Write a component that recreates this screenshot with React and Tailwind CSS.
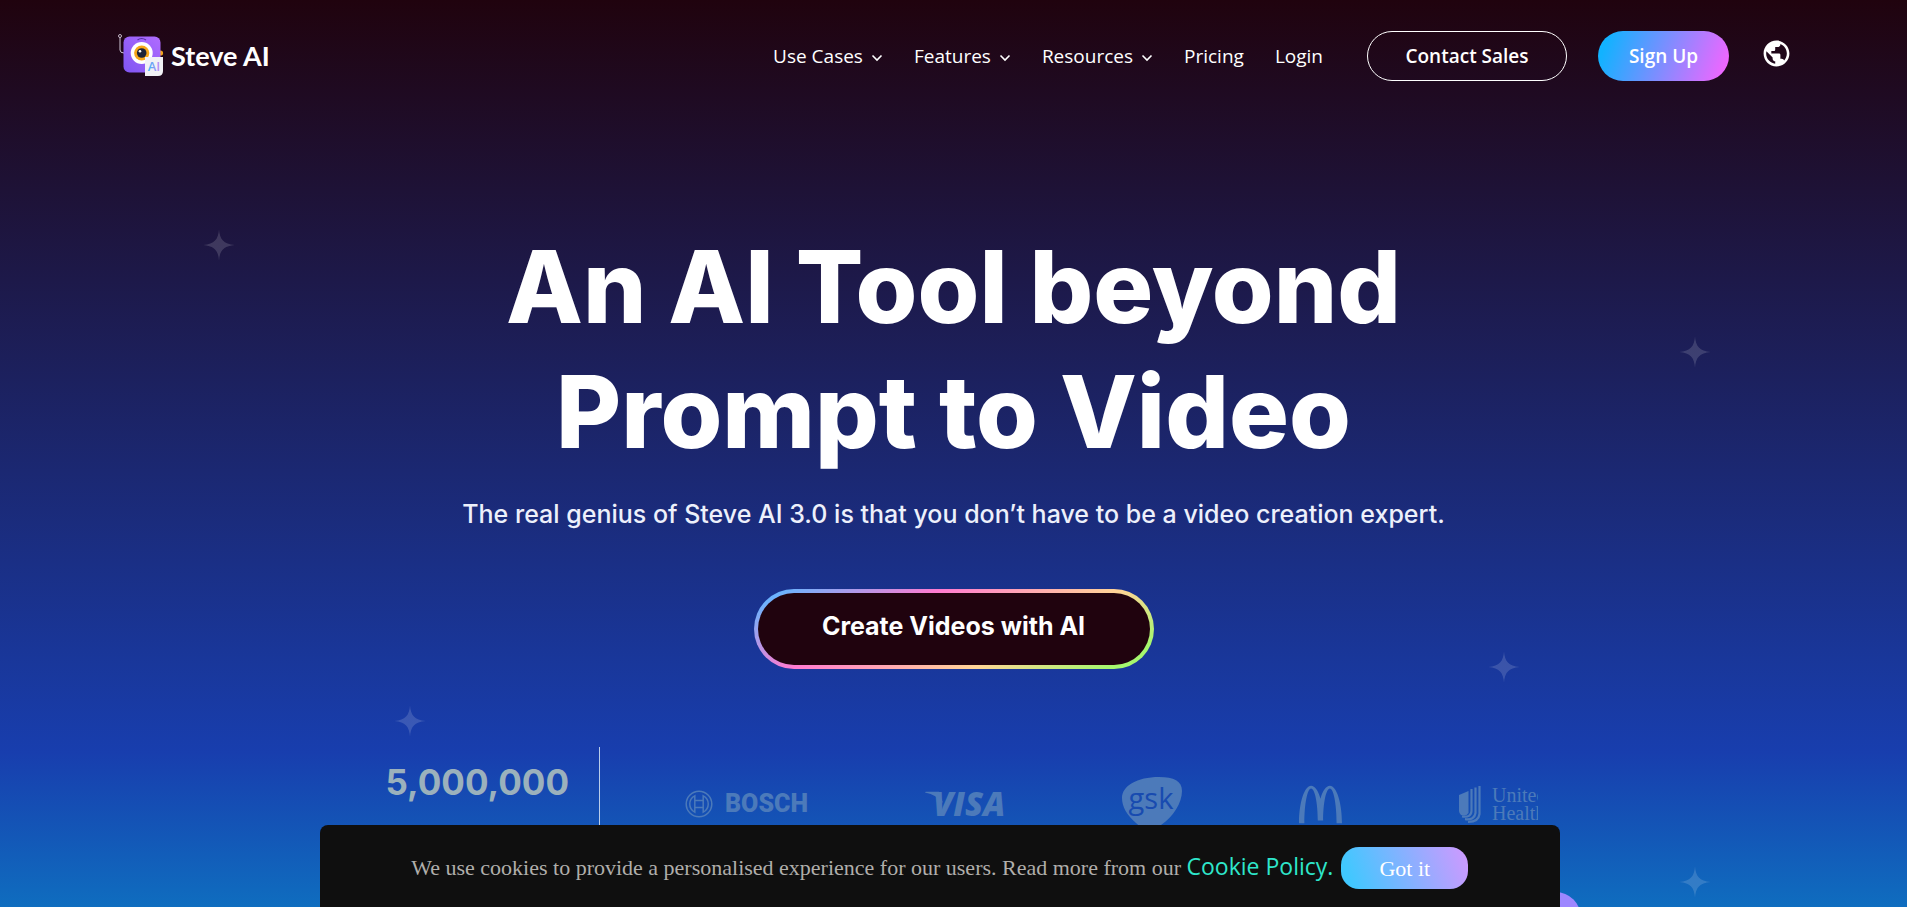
import React from "react";
import { MdPublic } from "react-icons/md";
import { SiMcdonalds } from "react-icons/si";

function Chevron() {
  return (
    <svg viewBox="0 0 12 8" className="mt-1 h-2 w-3" fill="none" stroke="currentColor" strokeWidth="1.6" aria-hidden="true">
      <path d="M1.5 1.5 6 6l4.5-4.5" />
    </svg>
  );
}

function Sparkle({ className }) {
  return (
    <svg viewBox="0 0 32 32" className={`absolute h-9 w-9 text-white/15 ${className}`} fill="currentColor" aria-hidden="true">
      <path d="M16 2C16.6 11 20 15 30 16C20 17 16.6 21 16 30C15.400 21 12 17 2 16C12 15 15.400 11 16 2Z" />
    </svg>
  );
}

function LogoMark() {
  return (
    <svg viewBox="0 0 46 44" className="h-11 w-[46px]" aria-hidden="true">
      <defs>
        <linearGradient id="body" x1="0" y1="1" x2="1" y2="0">
          <stop offset="0" stopColor="#7f55f2" />
          <stop offset="1" stopColor="#b06cff" />
        </linearGradient>
        <linearGradient id="tag" x1="0" y1="0" x2="1" y2="0">
          <stop offset="0" stopColor="#35b5f5" />
          <stop offset="1" stopColor="#c987f5" />
        </linearGradient>
      </defs>
      <path d="M2 3V16Q2 19 6 19" fill="none" stroke="#cfc6d6" strokeWidth="1" />
      <circle cx="2" cy="2" r="1.500" fill="none" stroke="#cfc6d6" strokeWidth="0.900" />
      <circle cx="42.500" cy="19" r="2.600" fill="#f5a51c" />
      <rect x="5.500" y="2.500" width="37" height="36" rx="6" fill="url(#body)" />
      <path d="M19.500 6Q23.500 3 28 6" fill="none" stroke="#54329f" strokeWidth="1.200" />
      <circle cx="23.700" cy="19" r="11" fill="#fff" />
      <circle cx="23.700" cy="19" r="7.600" fill="#f6a619" />
      <circle cx="23.700" cy="19" r="4.800" fill="#1c2438" />
      <circle cx="22" cy="17.200" r="1.300" fill="#fff" />
      <path d="M27 23H45V37Q45 42 40 42H27Z" fill="#f1f1f5" />
      <text x="36" y="37" textAnchor="middle" fontFamily="Open Sans" fontSize="13" fontWeight="600" fill="url(#tag)">AI</text>
    </svg>
  );
}

function BoschLogo() {
  return (
    <div className="flex items-center gap-3">
      <svg viewBox="0 0 28 28" className="h-7 w-7" fill="none" stroke="currentColor" strokeWidth="1.500" aria-hidden="true">
        <circle cx="14" cy="14" r="12.800" />
        <path d="M9.800 5.800A9.200 9.200 0 0 0 9.800 22.200ZM18.200 5.800A9.200 9.200 0 0 1 18.200 22.200Z" />
        <path d="M9.800 10.500H18.200M9.800 17.500H18.200" />
      </svg>
      <span className="font-[Roboto,sans-serif] text-[25px] leading-7 font-black">BOSCH</span>
    </div>
  );
}

function VisaLogo() {
  return (
    <svg viewBox="0 0 80 26" className="h-[26px] w-20 overflow-visible" fill="currentColor" role="img" aria-label="Visa">
      <path d="M0 1.500Q0 0.800 1 0.800H14L18 12Q12 4 0 1.500Z" />
      <text x="8" y="25" fontFamily="Open Sans" fontSize="33" fontStyle="italic" fontWeight="800">VISA</text>
    </svg>
  );
}

function GskLogo() {
  return (
    <svg viewBox="0 0 60 54" className="h-[54px] w-[60px]" role="img" aria-label="gsk">
      <path d="M0 21C0 9 15 0 37 0C52 0 60 4 60 14C60 26 51 40 39 48C30 56 22 54 14 46C5 38 0 30 0 21Z" fill="currentColor" />
      <text x="29" y="32" textAnchor="middle" fontFamily="Open Sans" fontSize="29" fill="#184bb0">gsk</text>
    </svg>
  );
}

function UnitedLogo() {
  return (
    <div className="flex shrink-0 items-center gap-[11px]">
      <svg viewBox="0 0 22 38" className="h-[38px] w-[22px]" fill="none" stroke="currentColor" strokeWidth="2.200" aria-hidden="true">
        <path d="M0 10L9.500 6V28Q7 32 2 30Q0 28 0 26Z" fill="currentColor" stroke="none" />
        <path d="M12.500 4V26Q12 33 3 31.500" />
        <path d="M16.500 2.500V28Q15.500 35.500 6 34.200" />
        <path d="M20.500 1V29Q19.500 37 9 36.800" />
      </svg>
      <span className="font-['Liberation_Serif',serif] text-[20px] leading-[18px]">
        United<br />Healthcare
      </span>
    </div>
  );
}

const menus = ["Use Cases", "Features", "Resources"];

export default function App() {
  return (
    <div className="relative min-h-screen overflow-hidden bg-[linear-gradient(180deg,#20030e_0%,#183eae_83%,#0f6dbf_100%)] font-['Open_Sans',sans-serif] text-white">
      <Sparkle className="top-[227px] left-[201px]" />
      <Sparkle className="top-[334px] right-[194px]" />
      <Sparkle className="top-[649px] right-[385px]" />
      <Sparkle className="top-[703px] left-[392px]" />
      <Sparkle className="top-[864px] right-[194px]" />

      <header className="flex items-center justify-between px-[118px] pt-[31px]">
        <a href="#" className="flex items-center gap-[7px]">
          <LogoMark />
          <span className="font-[Lato,sans-serif] text-[27px] leading-8 font-bold">Steve AI</span>
        </a>
        <div className="flex items-center">
          <nav className="flex items-center gap-[31px] text-[19px] leading-6 font-medium">
            {menus.map((name) => (
              <button key={name} type="button" className="flex items-center gap-2">
                {name}
                <Chevron />
              </button>
            ))}
            <a href="#">Pricing</a>
            <a href="#">Login</a>
          </nav>
          <a href="#" className="ml-11 flex h-[50px] w-[200px] items-center justify-center rounded-[25px] border border-white text-[19px] font-semibold">
            Contact Sales
          </a>
          <a href="#" className="ml-[31px] flex h-[50px] w-[131px] items-center justify-center rounded-[25px] bg-[linear-gradient(110deg,#12b2ff_8%,#f066ff_95%)] text-[19px] font-semibold">
            Sign Up
          </a>
          <button type="button" aria-label="Language" className="-mr-[3px] mb-[6px] ml-8">
            <MdPublic size={31} />
          </button>
        </div>
      </header>

      <main className="mx-auto flex max-w-[1168px] flex-col items-center pt-[143px] font-[Inter,sans-serif]">
        <h1 className="text-center text-[100px] leading-[125px] font-extrabold">
          An AI Tool beyond
          <br />
          Prompt to Video
        </h1>
        <p className="mt-6 text-center text-[25px] leading-[32px] font-medium text-[#edf0fb]">
          The real genius of Steve AI 3.0 is that you don’t have to be a video creation expert.
        </p>
        <a
          href="#"
          className="mt-[59px] flex h-20 w-[400px] items-center justify-center rounded-full border-4 border-transparent pb-1 text-[25px] font-bold [background:linear-gradient(#20030e,#20030e)_padding-box,linear-gradient(152deg,#66b5ff_5%,#ff7bd0_34%,#ffd596_67%,#a6f76e_91%)_border-box]"
        >
          Create Videos with AI
        </a>
        <section className="mt-[78px] flex h-[114px] w-full">
          <div className="border-r border-[#b9cdea] pt-[13px] pr-[30px] pl-4 text-[35px] leading-[44px] font-bold text-[#9bb1bc]">
            5,000,000
          </div>
          <div className="flex min-w-0 flex-1 items-center gap-[117px] overflow-hidden pl-[85px] text-[#4c7aba]">
            <BoschLogo />
            <div className="shrink-0"><VisaLogo /></div>
            <div className="shrink-0"><GskLogo /></div>
            <SiMcdonalds size={43} className="shrink-0" stroke="currentColor" />
            <UnitedLogo />
          </div>
        </section>
      </main>

      <button type="button" aria-label="Chat" className="fixed right-[326px] -bottom-9 h-[51px] w-[51px] rounded-full bg-[#9d87ff]" />

      <aside className="fixed bottom-0 left-80 flex h-[82px] w-[65%] items-center justify-center rounded-t-lg bg-[#0f0f0f] pt-1">
        <p className="mb-[2px] font-['Liberation_Serif',serif] text-[22px] leading-8 text-[#b0aeab]">
          We use cookies to provide a personalised experience for our users. Read more from our{" "}
          <a href="#" className="font-['Open_Sans',sans-serif] text-[23px] text-[#2ee6cb]">Cookie Policy.</a>
        </p>
        <button type="button" className="ml-2 h-[42px] w-[127px] rounded-[18px] bg-[linear-gradient(70deg,#40c8ff_8%,#c99bff_95%)] font-['Liberation_Serif',serif] text-[22px]">
          Got it
        </button>
      </aside>
    </div>
  );
}
